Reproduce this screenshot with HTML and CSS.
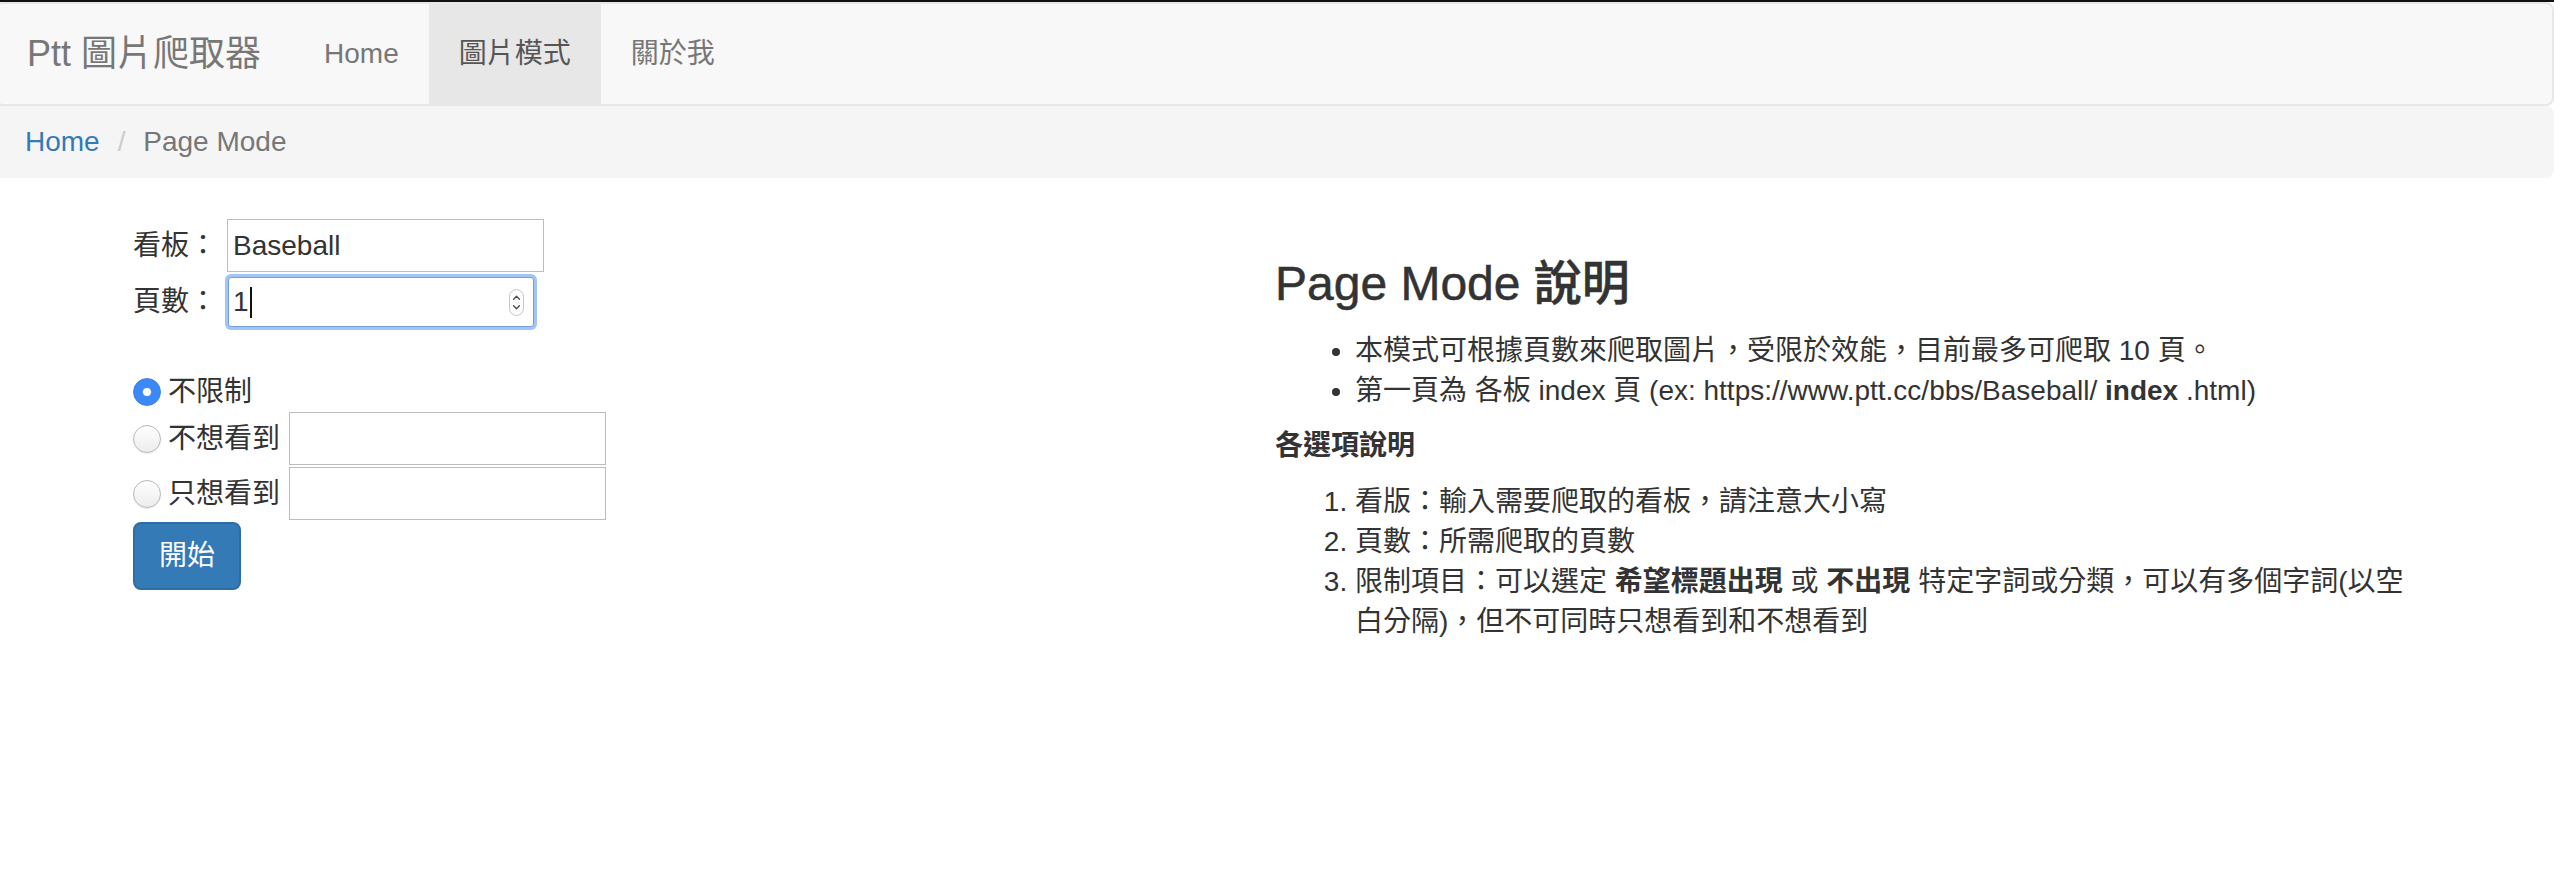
FILE: index.html
```html
<!DOCTYPE html>
<html lang="zh-Hant">
<head>
<meta charset="utf-8">
<title>Ptt 圖片爬取器 - Page Mode</title>
<link rel="stylesheet" href="styles.css">
</head>
<body>
<div class="topbar"></div>
<div class="page">
  <nav class="navbar">
    <a class="brand" href="#">Ptt 圖片爬取器</a>
    <ul class="nav">
      <li><a href="#">Home</a></li>
      <li class="active"><a href="#">圖片模式</a></li>
      <li><a href="#">關於我</a></li>
    </ul>
  </nav>
  <ol class="breadcrumb">
    <li><a href="#">Home</a></li>
    <li class="current">Page Mode</li>
  </ol>
  <div class="content">
    <form class="form-col">
      <div class="row row-board">
        <label class="field-label">看板：</label>
        <input class="text-input" type="text" value="Baseball">
      </div>
      <div class="row row-pages">
        <label class="field-label">頁數：</label>
        <div class="num-input">
          <span class="num-value">1</span><span class="caret"></span>
          <svg class="spinner" width="15" height="27" viewBox="0 0 15 27">
            <rect x="0.5" y="0.5" width="14" height="26" rx="7" fill="#fcfcfc" stroke="#c6c6c6"/>
            <path d="M4.6 10.2 L7.5 7.3 L10.4 10.2" fill="none" stroke="#4a4a4a" stroke-width="1.3" stroke-linecap="round" stroke-linejoin="round"/>
            <path d="M4.6 16.8 L7.5 19.7 L10.4 16.8" fill="none" stroke="#4a4a4a" stroke-width="1.3" stroke-linecap="round" stroke-linejoin="round"/>
          </svg>
        </div>
      </div>
      <label class="row radio-row radio-first">
        <input class="radio" type="radio" name="mode" checked>
        <span class="radio-text">不限制</span>
      </label>
      <div class="row radio-row radio-input">
        <input class="radio" type="radio" name="mode">
        <span class="radio-text">不想看到</span>
        <input class="text-input" type="text">
      </div>
      <div class="row radio-row radio-input radio-last">
        <input class="radio" type="radio" name="mode">
        <span class="radio-text">只想看到</span>
        <input class="text-input" type="text">
      </div>
      <button class="btn" type="button">開始</button>
    </form>
    <div class="info-col">
      <h3>Page Mode 說明</h3>
      <ul>
        <li>本模式可根據頁數來爬取圖片，受限於效能，目前最多可爬取 10 頁。</li>
        <li>第一頁為 各板 index 頁 (ex: https://www.ptt.cc/bbs/Baseball/ <strong>index</strong> .html)</li>
      </ul>
      <h5>各選項說明</h5>
      <ol>
        <li>看版：輸入需要爬取的看板，請注意大小寫</li>
        <li>頁數：所需爬取的頁數</li>
        <li>限制項目：可以選定 <strong>希望標題出現</strong> 或 <strong>不出現</strong> 特定字詞或分類，可以有多個字詞(以空白分隔)，但不可同時只想看到和不想看到</li>
      </ol>
    </div>
  </div>
</div>
</body>
</html>
```
FILE: styles.css
```css
* {
  box-sizing: border-box;
}

html,
body {
  margin: 0;
  padding: 0;
  background: #fff;
}

body {
  font-family: "Liberation Sans", "Noto Sans CJK TC", sans-serif;
  font-size: 28px;
  line-height: 40px;
  color: #333;
}

.topbar {
  height: 2px;
  background: #111;
}

.page {
  margin-left: -5px;
}

/* Navbar */
.navbar {
  display: flex;
  height: 104px;
  background: #f8f8f8;
  border: 2px solid #e7e7e7;
  border-radius: 8px;
}

.brand {
  display: block;
  padding: 30px 33px 30px 30px;
  font-size: 36px;
  line-height: 40px;
  color: #777;
  text-decoration: none;
}

.nav {
  display: flex;
  margin: 0;
  padding: 0;
  list-style: none;
}

.nav a {
  display: block;
  padding: 30px;
  line-height: 40px;
  color: #777;
  text-decoration: none;
}

.nav .active a {
  background: #e7e7e7;
  color: #555;
}

/* Breadcrumb */
.breadcrumb {
  display: flex;
  gap: 8px;
  margin: 0 0 40px;
  padding: 16px 30px;
  list-style: none;
  background: #f5f5f5;
  border-radius: 8px;
}

.breadcrumb li + li::before {
  content: "/\00a0";
  padding: 0 10px;
  color: #ccc;
}

.breadcrumb a {
  color: #337ab7;
  text-decoration: none;
}

.breadcrumb .current {
  color: #777;
}

/* Content */
.content {
  display: grid;
  grid-template-columns: 1142px 1142px;
  padding-left: 138px;
}

.form-col {
  display: flex;
  flex-direction: column;
  align-items: flex-start;
  padding-top: 1px;
}

.row {
  display: flex;
  align-items: center;
}

.row-board {
  height: 53px;
  gap: 10px;
}

.row-pages {
  height: 56px;
  margin-top: 2px;
}

.field-label {
  display: block;
  line-height: 40px;
}

.text-input {
  width: 317px;
  height: 53px;
  margin: 0;
  padding: 0 5px;
  border: 1px solid #bdbdbd;
  border-radius: 0;
  font-family: "Liberation Sans", "Noto Sans CJK TC", sans-serif;
  font-size: 28px;
  color: #333;
  background: #fff;
  outline: none;
}

.num-input {
  display: flex;
  align-items: center;
  width: 306px;
  height: 50px;
  margin-left: 11px;
  padding: 0 9px 0 4px;
  border: 1px solid #6f9fe2;
  border-radius: 3px;
  box-shadow: 0 0 0 3px #a2c5f3;
  background: #fff;
}

.num-value {
  line-height: 40px;
  color: #333;
}

.caret {
  width: 2px;
  height: 31px;
  margin-left: 1px;
  background: #111;
}

.spinner {
  margin-left: auto;
  display: block;
}

.radio-row {
  gap: 7px;
}

.radio-first {
  height: 40px;
  margin-top: 42px;
}

.radio-input {
  height: 53px;
}

.radio-input .text-input {
  margin-left: 2px;
}

.radio-last {
  margin-top: 2px;
}

.radio {
  -webkit-appearance: none;
  appearance: none;
  flex: none;
  width: 28px;
  height: 28px;
  margin: 0;
  border: 1px solid #b8b8b8;
  border-radius: 50%;
  background: linear-gradient(#ffffff, #ececec);
  box-shadow: 0 1px 1px rgba(0, 0, 0, 0.08);
}

.radio:checked {
  border-color: #3880ec;
  background: radial-gradient(circle, #fff 0, #fff 3.6px, #3b88f6 4.6px);
  box-shadow: none;
}

.radio-text {
  line-height: 40px;
  color: #333;
}

.btn {
  margin-top: 2px;
  height: 68px;
  padding: 0 24px;
  border: 2px solid #2e6da4;
  border-radius: 8px;
  background: #337ab7;
  color: #fff;
  font-family: "Liberation Sans", "Noto Sans CJK TC", sans-serif;
  font-size: 28px;
  line-height: 40px;
}

/* Info column */
.info-col h3 {
  margin: 40px 0 20px;
  font-size: 48px;
  line-height: 52.8px;
  font-weight: 500;
  color: #333;
  -webkit-text-stroke: 0.5px #333;
}

.info-col ul,
.info-col ol {
  margin: 0 0 20px;
  padding-left: 80px;
}

.info-col h5 {
  margin: 20px 0;
  font-size: 28px;
  line-height: 30.8px;
  font-weight: 700;
}
```
